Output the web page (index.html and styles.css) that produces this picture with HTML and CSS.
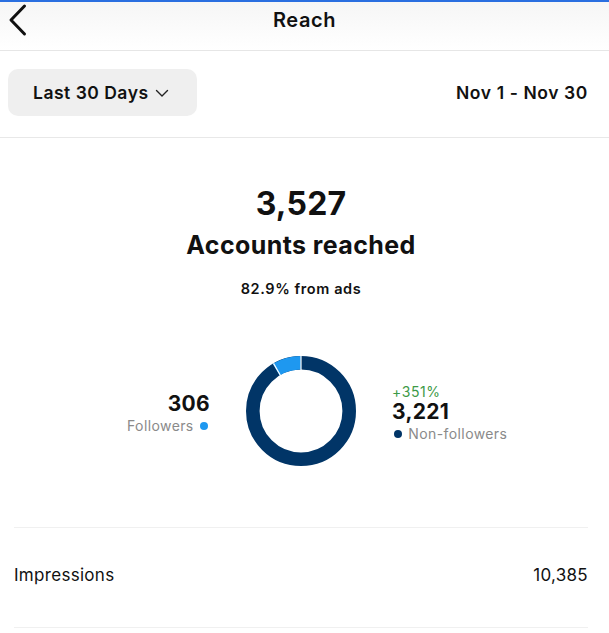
FILE: index.html
```html
<!DOCTYPE html>
<html>
<head>
<meta charset="utf-8">
<link rel="stylesheet" href="styles.css">
</head>
<body>
<div class="topline"></div>
<header class="header">
  <svg class="back" width="20" height="34" viewBox="0 0 20 34"><path d="M16.5 3 L3 17 L16.5 31" fill="none" stroke="#111" stroke-width="3" stroke-linecap="round" stroke-linejoin="round"/></svg>
  <div class="title">Reach</div>
</header>
<div class="filters">
  <div class="range-btn">Last 30 Days
    <svg class="chev" width="14" height="9" viewBox="0 0 14 9"><path d="M1.5 1.5 L7 7 L12.5 1.5" fill="none" stroke="#222" stroke-width="1.4" stroke-linecap="round" stroke-linejoin="round"/></svg>
  </div>
  <div class="dates">Nov 1 - Nov 30</div>
</div>
<section class="summary">
  <div class="big">3,527</div>
  <div class="sub">Accounts reached</div>
  <div class="ads">82.9% from ads</div>
  <div class="chart-row">
    <div class="side left">
      <div class="num">306</div>
      <div class="lbl">Followers <span class="dot light"></span></div>
    </div>
    <svg class="donut" width="110" height="110" viewBox="0 0 110 110">
      <circle cx="55" cy="55" r="48.2" fill="none" stroke="#013567" stroke-width="13.6"/>
      <circle cx="55" cy="55" r="48.2" fill="none" stroke="#1e98f0" stroke-width="13.6" stroke-dasharray="26 300" transform="rotate(-121 55 55)"/>
      <line x1="55" y1="0" x2="55" y2="16" stroke="#fff" stroke-width="1.2"/>
      <line x1="27.5" y1="7.4" x2="35.5" y2="21.2" stroke="#fff" stroke-width="1.2"/>
    </svg>
    <div class="side right">
      <div class="pct">+351%</div>
      <div class="num">3,221</div>
      <div class="lbl"><span class="dot dark"></span> Non-followers</div>
    </div>
  </div>
</section>
<div class="rows">
  <div class="row"><span>Impressions</span><span>10,385</span></div>
</div>
</body>
</html>
```
FILE: styles.css
```css
html, body { margin: 0; padding: 0; background: #fff; }
body { font-family: Inter, "Liberation Sans", sans-serif; color: #111; width: 609px; height: 633px; overflow: hidden; }
.topline { height: 2px; background: #2a6fe0; }
.header { height: 48px; border-bottom: 1px solid #e6e6e6; display: flex; align-items: center; justify-content: center; position: relative; background: linear-gradient(#f6f6f6, #fff); }
.back { position: absolute; left: 8px; top: 1px; }
.title { font-size: 20px; font-weight: 600; margin-top: -13px; letter-spacing: 0.6px; }
.filters { display: flex; align-items: center; justify-content: space-between; padding: 18px 21px 21px 8px; border-bottom: 1px solid #e8e8e8; }
.range-btn { width: 189px; height: 47px; box-sizing: border-box; background: #efefef; border-radius: 10px; display: flex; align-items: center; padding-left: 25px; font-size: 17.5px; font-weight: 600; gap: 6px; letter-spacing: 0.5px; }
.chev { margin-top: 1px; }
.dates { font-size: 17.5px; font-weight: 600; letter-spacing: 0.6px; }
.summary { display: flex; flex-direction: column; align-items: center; padding-top: 48px; padding-bottom: 61px; border-bottom: 1px solid #f0f0f0; margin: 0 21px 0 14px; }
.big { font-size: 32px; font-weight: 700; line-height: 36px; letter-spacing: 0.2px; }
.sub { font-size: 25px; font-weight: 700; line-height: 30px; margin-top: 8px; letter-spacing: 0.4px; }
.ads { font-size: 14.5px; font-weight: 600; margin-top: 20px; letter-spacing: 0.6px; }
.chart-row { display: grid; grid-template-columns: 1fr auto 1fr; align-items: center; align-self: stretch; margin-top: 59px; }
.donut { display: block; margin: 0 36px; }
.side.left { text-align: right; margin-top: 4px; }
.side.right { margin-top: 4px; }
.num { font-size: 21px; font-weight: 700; line-height: 24px; letter-spacing: 0.3px; }
.lbl { font-size: 14px; color: #8a8a8a; line-height: 18px; margin-top: 1px; letter-spacing: 0.4px; }
.pct { font-size: 14px; color: #3d9a47; line-height: 17px; letter-spacing: 0.6px; }
.dot { display: inline-block; width: 8px; height: 8px; border-radius: 50%; vertical-align: 1px; margin: 0 2px; }
.dot.light { background: #1e98f0; }
.dot.dark { background: #013567; }
.rows { margin: 0 21px 0 14px; }
.row { display: flex; justify-content: space-between; height: 100px; align-items: center; border-bottom: 1px solid #f0f0f0; font-size: 17px; color: #111; letter-spacing: 0.3px; padding-bottom: 6px; box-sizing: border-box; }
```
